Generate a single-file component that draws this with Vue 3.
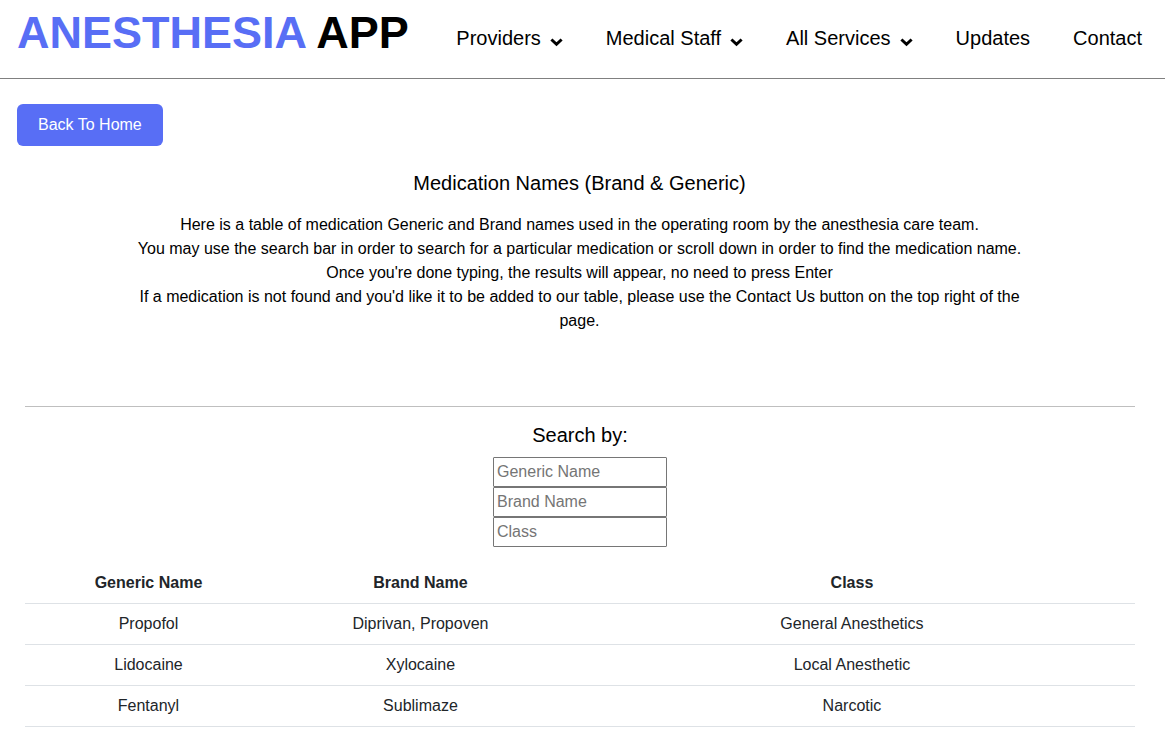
<script setup>
import { computed, reactive } from 'vue'

const links = [
  { label: 'Providers', menu: true },
  { label: 'Medical Staff', menu: true },
  { label: 'All Services', menu: true },
  { label: 'Updates', menu: false },
  { label: 'Contact', menu: false },
]

const columns = [
  { key: 'generic', label: 'Generic Name' },
  { key: 'brand', label: 'Brand Name' },
  { key: 'type', label: 'Class' },
]

const medications = [
  { generic: 'Propofol', brand: 'Diprivan, Propoven', type: 'General Anesthetics' },
  { generic: 'Lidocaine', brand: 'Xylocaine', type: 'Local Anesthetic' },
  { generic: 'Fentanyl', brand: 'Sublimaze', type: 'Narcotic' },
]

const search = reactive({ generic: '', brand: '', type: '' })

const results = computed(() =>
  medications.filter((item) =>
    columns.every(({ key }) => item[key].toLowerCase().includes(search[key].toLowerCase()))
  )
)
</script>

<template>
  <div class="page">
    <header class="header">
      <a class="logo" href="#"><span class="accent">ANESTHESIA</span> APP</a>
      <nav class="nav">
        <a v-for="link in links" :key="link.label" class="nav-link" href="#">
          {{ link.label }}
          <svg v-if="link.menu" class="chevron" viewBox="0 0 13 9" aria-hidden="true">
            <path d="M1.4 1.5 L6.5 6.3 L11.6 1.5" />
          </svg>
        </a>
      </nav>
    </header>

    <main>
      <button class="back" type="button">Back To Home</button>

      <section class="intro">
        <h1 class="title">Medication Names (Brand &amp; Generic)</h1>
        <p class="text">
          Here is a table of medication Generic and Brand names used in the operating room by the anesthesia care team.<br />
          You may use the search bar in order to search for a particular medication or scroll down in order to find the medication name.<br />
          Once you're done typing, the results will appear, no need to press Enter<br />
          If a medication is not found and you'd like it to be added to our table, please use the Contact Us button on the top right of the page.
        </p>
      </section>

      <section class="content">
        <h2 class="title">Search by:</h2>
        <form class="search" @submit.prevent>
          <input
            v-for="column in columns"
            :key="column.key"
            v-model="search[column.key]"
            class="field"
            type="text"
            :placeholder="column.label"
            :aria-label="column.label"
          />
        </form>

        <table class="table">
          <colgroup>
            <col class="col-generic" />
            <col class="col-brand" />
            <col />
          </colgroup>
          <thead>
            <tr>
              <th v-for="column in columns" :key="column.key" scope="col">{{ column.label }}</th>
            </tr>
          </thead>
          <tbody>
            <tr v-for="item in results" :key="item.generic">
              <td v-for="column in columns" :key="column.key">{{ item[column.key] }}</td>
            </tr>
          </tbody>
        </table>
      </section>
    </main>
  </div>
</template>

<style>
body {
  margin: 0;
  background: #fff;
}
</style>

<style scoped>
.page {
  font-family: "Liberation Sans", Arial, sans-serif;
  font-size: 16px;
  line-height: 24px;
  color: #000;
}

.header {
  display: flex;
  justify-content: space-between;
  align-items: flex-start;
  padding: 6px 23px 18px 17px;
  border-bottom: 1px solid #808080;
}

.logo {
  font-size: 45px;
  line-height: 54px;
  font-weight: 700;
  color: #000;
  text-decoration: none;
  white-space: nowrap;
}

.accent {
  color: #586ef5;
}

.nav {
  display: flex;
  gap: 43px;
  padding-top: 20px;
}

.nav-link {
  display: flex;
  align-items: center;
  gap: 9px;
  font-size: 20px;
  line-height: 24px;
  color: #000;
  text-decoration: none;
  white-space: nowrap;
}

.chevron {
  width: 13px;
  height: 9px;
  margin-top: 8px;
}

.chevron path {
  fill: none;
  stroke: #000;
  stroke-width: 3;
}

.back {
  display: block;
  margin: 25px 0 25px 17px;
  padding: 9px 21px;
  border: 0;
  border-radius: 6px;
  background: #586ef5;
  color: #fff;
  font: inherit;
}

.intro {
  max-width: 910px;
  margin: 0 auto;
  padding-right: 6px;
  text-align: center;
}

.title {
  margin: 0;
  font-size: 20px;
  line-height: 24px;
  font-weight: 400;
}

.text {
  margin: 18px 0 0;
}

.content {
  margin: 73px 30px 0 25px;
  padding-top: 16px;
  border-top: 1px solid #bfbfbf;
  text-align: center;
}

.search {
  display: flex;
  flex-direction: column;
  align-items: center;
  margin: 10px 0 16px;
}

.field {
  box-sizing: border-box;
  width: 174px;
  height: 30px;
  padding: 1px 3px;
  border: 1px solid #767676;
  border-radius: 1px;
  background: #fff;
  color: #000;
  font: inherit;
}

.field::placeholder {
  color: #757575;
  opacity: 1;
}

.table {
  width: 100%;
  table-layout: fixed;
  border-collapse: collapse;
  color: #212529;
}

.col-generic {
  width: 22.25%;
}

.col-brand {
  width: 26.75%;
}

.table th,
.table td {
  padding: 8px;
  border-bottom: 1px solid #dee2e6;
}

.table th {
  font-weight: 700;
}
</style>
